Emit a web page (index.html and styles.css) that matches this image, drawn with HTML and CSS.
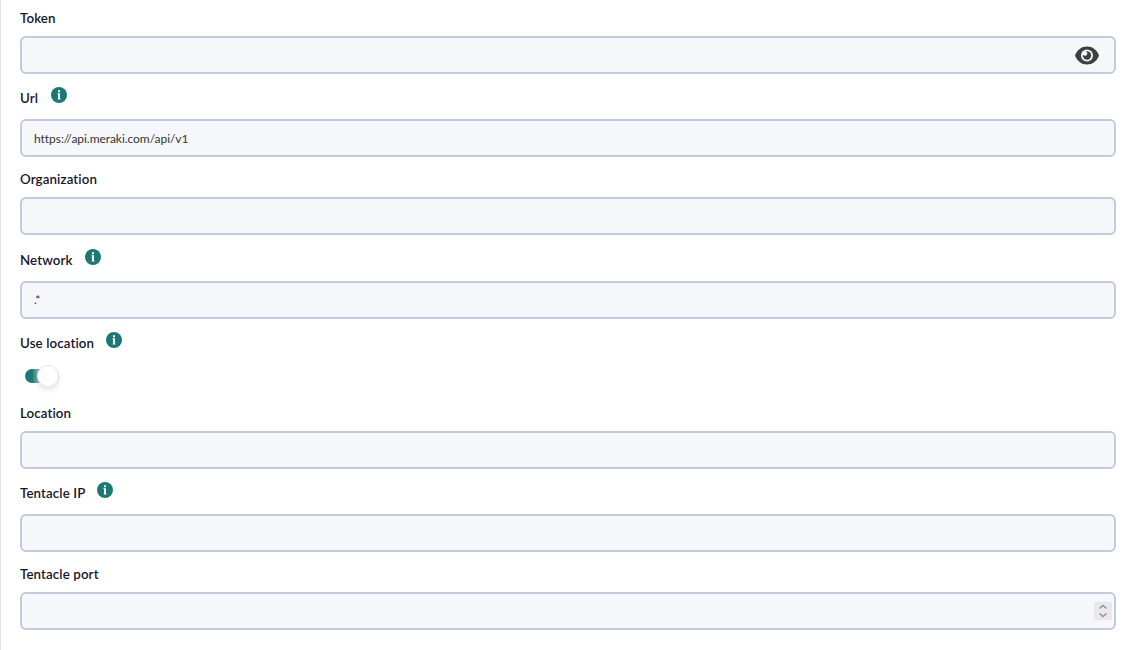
FILE: index.html
```html
<!DOCTYPE html>
<html lang="en">
<head>
    <meta charset="UTF-8">
    <meta name="viewport" content="width=device-width, initial-scale=1.0">
    <title>Meraki settings</title>
    <link rel="stylesheet" href="styles.css">
</head>
<body>
    <svg width="0" height="0" class="symbols">
        <symbol id="info" viewBox="0 0 16 16">
            <circle cx="8" cy="8" r="8" fill="#1d7873"/>
            <path d="M7 3.300h2v2H7zM6.500 6.300H9v5.200h.5v1H6.700v-1H7V7.300h-.5z" fill="#fff"/>
        </symbol>
    </svg>

    <form class="settings">
        <label class="field-label first" for="token">Token</label>
        <div class="field">
            <input type="password" id="token">
            <svg class="eye" viewBox="0 0 24 18">
                <path d="M12 0C6.500 0 2 3.400 0 9c2 5.600 6.500 9 12 9s10-3.400 12-9C22 3.400 17.500 0 12 0z" fill="#3f3f3f"/>
                <circle cx="12" cy="9" r="6" fill="#f6f7fb"/>
                <circle cx="12" cy="9" r="4.200" fill="#3f3f3f"/>
                <circle cx="10" cy="7" r="2.300" fill="#f6f7fb"/>
            </svg>
        </div>

        <label class="field-label with-info url" for="url">Url
            <svg class="info"><use href="#info"/></svg>
        </label>
        <div class="field">
            <input type="text" id="url" value="https://api.meraki.com/api/v1">
        </div>

        <label class="field-label" for="organization">Organization</label>
        <div class="field">
            <input type="text" id="organization">
        </div>

        <label class="field-label with-info network" for="network">Network
            <svg class="info"><use href="#info"/></svg>
        </label>
        <div class="field">
            <input type="text" class="pattern" id="network" value=".*">
        </div>

        <label class="field-label with-info" for="use-location">Use location
            <svg class="info"><use href="#info"/></svg>
        </label>
        <div class="switch-row">
            <input type="checkbox" class="switch" id="use-location" checked>
        </div>

        <label class="field-label" for="location">Location</label>
        <div class="field">
            <input type="text" id="location">
        </div>

        <label class="field-label with-info tentacle" for="tentacle-ip">Tentacle IP
            <svg class="info"><use href="#info"/></svg>
        </label>
        <div class="field">
            <input type="text" id="tentacle-ip">
        </div>

        <label class="field-label" for="tentacle-port">Tentacle port</label>
        <div class="field">
            <input type="number" id="tentacle-port">
            <svg class="spinner" viewBox="0 0 18 18">
                <path d="M5.500 6.500L9 3.500l3.500 3M5.500 11.500l3.500 3 3.500-3" fill="none" stroke="#92919c" stroke-width="1.500"/>
            </svg>
        </div>
    </form>
</body>
</html>
```

FILE: styles.css
```css
* {
    box-sizing: border-box;
}

body {
    margin: 0;
    height: 650px;
    overflow: hidden;
    background-color: #fff;
    border-left: 1px solid #e1e1e1;
    font-family: Lato, "Open Sans", sans-serif;
    font-variant-ligatures: none;
}

.symbols {
    position: absolute;
}

.settings {
    padding: 0 16px 0 19px;
}

.field-label {
    display: flex;
    align-items: flex-start;
    height: 40px;
    padding-top: 12px;
    font-size: 13.33px;
    font-weight: 600;
    letter-spacing: 0.1px;
    line-height: 20px;
    color: #161628;
}

.field-label.first {
    height: 36px;
    padding-top: 8px;
}

.field-label.with-info {
    height: 45px;
    padding-top: 14px;
}

.field-label.network {
    height: 46px;
    padding-top: 15px;
}

.info {
    width: 16px;
    height: 16px;
    margin: -1px 0 0 12.4px;
}

.url .info {
    margin-left: 13.2px;
}

.tentacle .info {
    margin-left: 11.6px;
}

.field {
    position: relative;
    height: 38px;
}

.field input {
    display: block;
    width: 100%;
    height: 38px;
    margin: 0;
    padding: 0 12px;
    border: 2px solid #c0ccdc;
    border-radius: 6px;
    background-color: #f6f7fb;
    font-family: inherit;
    font-size: 12px;
    font-variant-ligatures: none;
    letter-spacing: -0.05px;
    color: #343434;
    outline: none;
}

.field input.pattern {
    padding-bottom: 1px;
    letter-spacing: -1.5px;
}

.field input[type="number"] {
    appearance: textfield;
}

.eye {
    position: absolute;
    top: 10px;
    right: 17px;
    width: 24px;
    height: 19px;
}

.spinner {
    position: absolute;
    top: 10px;
    right: 4px;
    width: 18px;
    height: 18px;
    background-color: #e9e8ed;
}

.switch-row {
    height: 27px;
    padding: 5px 0 0 5px;
}

.switch {
    appearance: none;
    position: relative;
    display: block;
    width: 34px;
    height: 14px;
    margin: 0;
    border-radius: 7px;
    background: linear-gradient(to right, #1d7873 7px, #82b4b1 13px);
}

.switch::after {
    content: "";
    box-sizing: border-box;
    position: absolute;
    top: -4px;
    right: 0;
    width: 22px;
    height: 22px;
    border: 1px solid #e6eaee;
    border-radius: 50%;
    background-color: #fff;
    box-shadow: 0 3px 5px rgba(0, 0, 50, 0.1);
}
```
